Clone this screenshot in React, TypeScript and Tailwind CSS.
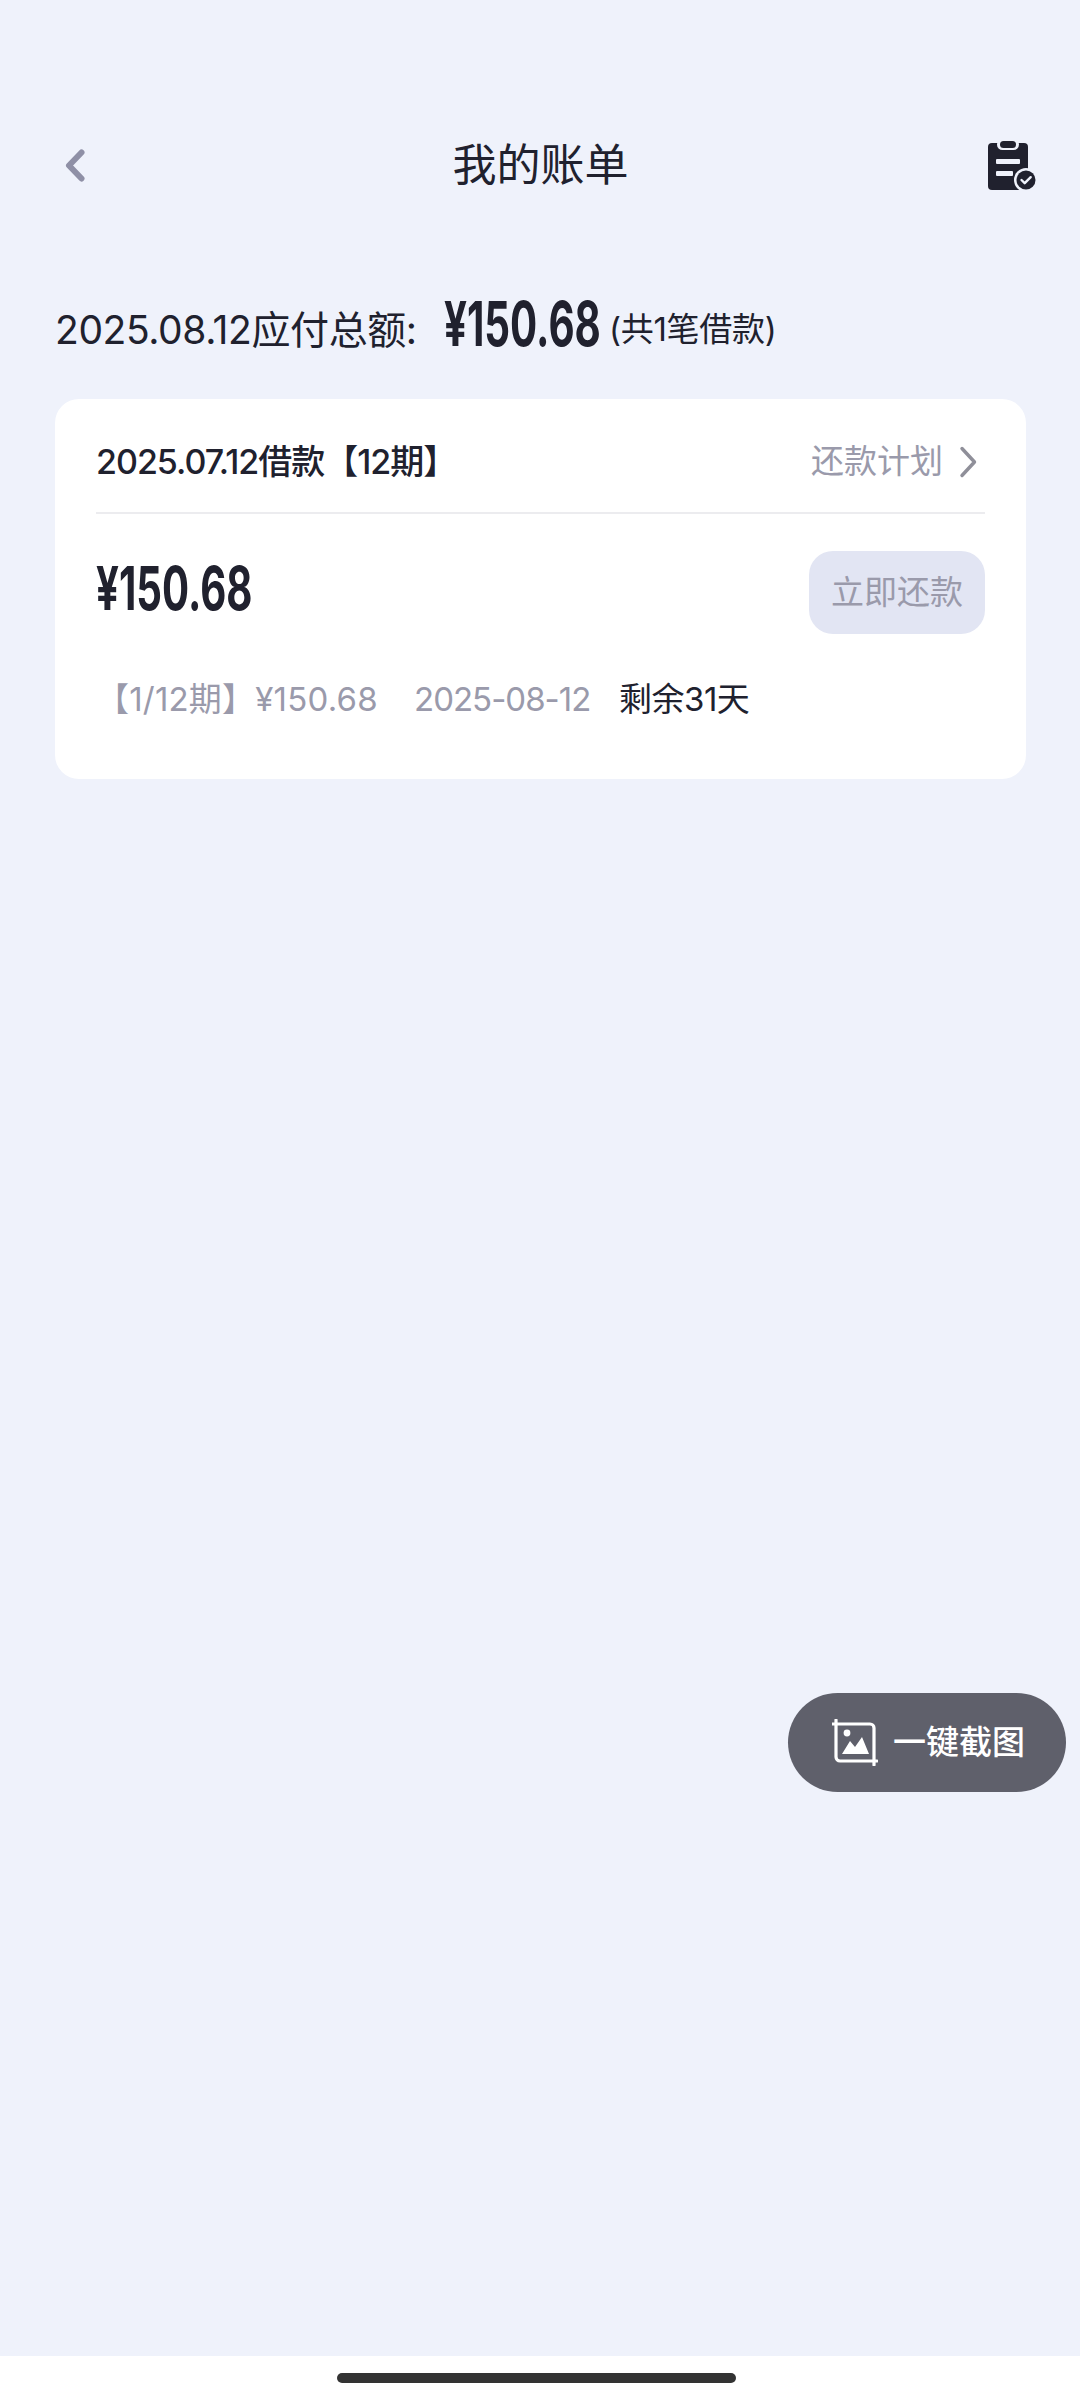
const BackIcon = () => (
  <svg width="21" height="33" viewBox="0 0 21 33" fill="none" className="block">
    <path d="M17.5 3.5 5 16.5l12.5 13" stroke="#8F90A6" strokeWidth="6" strokeLinecap="round" strokeLinejoin="round" />
  </svg>
);

const BillIcon = () => (
  <svg width="52" height="52" viewBox="0 0 52 52" fill="none" className="block">
    <rect x="1" y="5" width="40" height="47" rx="4" fill="#20212E" />
    <rect x="10" y="1" width="22" height="11" rx="5.5" fill="#EFF2FB" />
    <rect x="13" y="3" width="16" height="7" rx="3.5" fill="#20212E" />
    <rect x="9" y="21" width="24" height="5" rx="1" fill="#EFF2FB" />
    <rect x="9" y="33" width="17" height="5" rx="1" fill="#EFF2FB" />
    <circle cx="39" cy="42" r="12" fill="#EFF2FB" />
    <circle cx="39" cy="42" r="9.5" fill="#20212E" />
    <path d="m34.5 42 3.2 3.2 6-6" stroke="#EFF2FB" strokeWidth="2.4" strokeLinecap="round" strokeLinejoin="round" />
  </svg>
);

const ChevronIcon = () => (
  <svg width="19" height="32" viewBox="0 0 19 32" fill="none" className="block">
    <path d="M3 2.5 15.5 16 3 29.5" stroke="#8F8F99" strokeWidth="3.4" strokeLinecap="round" strokeLinejoin="round" />
  </svg>
);

const CropImageIcon = () => (
  <svg width="46" height="47" viewBox="0 0 46 47" fill="none" className="block">
    <path d="M4 1v37a4 4 0 0 0 4 4h37" stroke="#fff" strokeWidth="3.2" strokeLinecap="round" />
    <path d="M0.5 5H38a4 4 0 0 1 4 4v37" stroke="#fff" strokeWidth="3.2" strokeLinecap="round" />
    <circle cx="15" cy="14" r="3.4" fill="#fff" />
    <path d="M10 35l8-13 5 6 7-10 7 17z" fill="#fff" />
  </svg>
);

export default function App() {
  return (
    <div
      className="relative flex h-[2400px] w-[1080px] flex-col overflow-hidden bg-white text-[#20212E]"
      style={{ fontFamily: 'Inter, "Noto Sans CJK SC", sans-serif' }}
    >
      <div className="flex h-[2356px] flex-col bg-[#EFF2FB] pl-[55px] pr-[54px] pt-[115px]">
        {/* Header */}
        <div className="relative flex h-[100px] items-center justify-between">
          <div className="pl-[9px]">
            <BackIcon />
          </div>
          <h1 className="absolute left-0 right-0 text-center text-[44px] leading-[56px] font-normal">我的账单</h1>
          <div className="-mr-[13px] -mt-[2px]">
            <BillIcon />
          </div>
        </div>

        {/* Total */}
        <div className="mt-[85px] flex h-[60px] items-center whitespace-nowrap">
          <span className="w-[389px] text-[39px] tracking-[-0.4px]">2025.08.12应付总额:</span>
          <span className="w-[166px] origin-left scale-x-[0.65] text-[62px] leading-[60px] font-bold -translate-y-[6px]">
            ¥150.68
          </span>
          <span className="-ml-[1px] text-[33px] tracking-[-0.3px]">(共1笔借款)</span>
        </div>

        {/* Bill card */}
        <div className="mt-[39px] h-[380px] rounded-[24px] bg-white px-[41px]">
          <div className="flex h-[115px] items-center justify-between border-b-2 border-[#ECECEF]">
            <span className="pt-[12px] text-[34px] font-medium tracking-[-1px]">2025.07.12借款【12期】</span>
            <div className="flex items-center gap-[16px] pr-[7px] pt-[12px] text-[33px] text-[#9A9AAB]">
              <span>还款计划</span>
              <ChevronIcon />
            </div>
          </div>

          <div className="mt-[37px] flex h-[83px] items-center justify-between">
            <span className="origin-left scale-x-[0.67] text-[60px] leading-[60px] font-bold -translate-y-[5px]">¥150.68</span>
            <button className="h-[83px] w-[176px] rounded-[24px] bg-[#E2E5F3] text-[33px] text-[#9A9AAB]">立即还款</button>
          </div>

          <div className="mt-[44px] flex h-[44px] items-center whitespace-nowrap text-[33px] tracking-[-0.5px]">
            <span className="w-[318px] tracking-[0.2px] text-[#9A9AAB]">【1/12期】¥150.68</span>
            <span className="w-[205px] tracking-[-1px] text-[#9A9AAB]">2025-08-12</span>
            <span className="text-[#20212E]">剩余31天</span>
          </div>
        </div>
      </div>

      {/* Screenshot button */}
      <div className="absolute left-[788px] top-[1693px] flex h-[99px] w-[278px] items-center rounded-full bg-[#5F606B] pl-[44px] text-white">
        <CropImageIcon />
        <span className="ml-[15px] text-[33px] font-medium leading-none">一键截图</span>
      </div>

      {/* Home indicator */}
      <div className="flex flex-1 items-center justify-center">
        <div className="-ml-[7px] h-[10px] w-[399px] rounded-full bg-[#333333]" />
      </div>
    </div>
  );
}
